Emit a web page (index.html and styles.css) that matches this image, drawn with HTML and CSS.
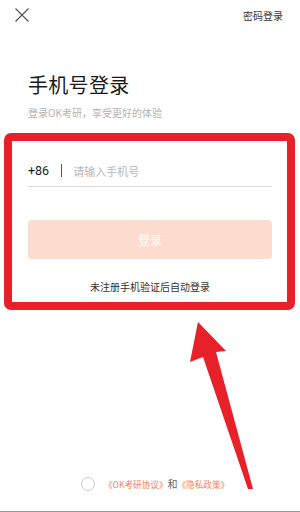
FILE: index.html
```html
<!DOCTYPE html>
<html lang="zh-CN">

<head>
    <meta charset="UTF-8">
    <meta name="viewport" content="width=device-width, initial-scale=1.0">
    <link rel="stylesheet" href="styles.css">
    <title>手机号登录</title>
</head>

<body>

    <div class="page">
        <header class="top-bar">
            <svg class="close-icon" width="14" height="14" viewBox="0 0 14 14">
                <path d="M0.5 0.5 L13.5 13.5 M13.5 0.5 L0.5 13.5" stroke="#555" stroke-width="1.2" fill="none" />
            </svg>
            <a href="#" class="pwd-login">密码登录</a>
        </header>

        <h1 class="title">手机号登录</h1>
        <p class="subtitle">登录OK考研，享受更好的体验</p>

        <div class="login-box">
            <div class="phone-row">
                <span class="code">+86</span>
                <span class="divider"></span>
                <input type="text" placeholder="请输入手机号">
            </div>
            <button type="button" class="login-btn">登录</button>
            <p class="hint">未注册手机验证后自动登录</p>
        </div>

        <div class="agree">
            <span class="radio"></span>
            <a href="#">《OK考研协议》</a><span class="and">和</span><a href="#">《隐私政策》</a>
        </div>

        <!-- annotation arrow -->
        <svg class="arrow" width="300" height="512" viewBox="0 0 300 512">
            <polygon points="198,322 226,351 216,352 253,489 248,489 203,357 190,362" fill="#e8202a" />
        </svg>
    </div>

</body>

</html>
```

FILE: styles.css
```css
body {
    margin: 0;
    padding: 0;
    background-color: #fff;
    color: #222;
    font-family: "Noto Sans CJK SC", "Noto Sans", sans-serif;
}

.page {
    position: relative;
    width: 300px;
    height: 511px;
    border-bottom: 1px solid #9a9a9a;
    display: flex;
    flex-direction: column;
}

.top-bar {
    display: flex;
    justify-content: space-between;
    align-items: center;
    height: 30px;
    padding: 0 17px 0 15px;
}

.close-icon {
    display: block;
}

.pwd-login {
    font-size: 10px;
    color: #333;
    text-decoration: none;
}

.title {
    margin: 42px 0 0 28px;
    font-size: 20px;
    font-weight: 400;
    line-height: 26px;
    color: #1a1a1a;
    letter-spacing: 0.3px;
}

.subtitle {
    margin: 8px 0 0 28px;
    font-size: 10px;
    line-height: 14px;
    color: #b3b3b3;
}

.login-box {
    margin: 13px 5px 0 4px;
    border: 8px solid #e8202a;
    border-radius: 7px;
    padding: 14px 15px 0 16px;
    height: 147px;
}

.phone-row {
    display: flex;
    align-items: center;
    height: 31px;
    border-bottom: 1px solid #dcdcdc;
}

.code {
    font-family: "Roboto", "Noto Sans", sans-serif;
    font-size: 12.5px;
    color: #222;
}

.divider {
    width: 1px;
    height: 13px;
    background-color: #555;
    margin: 0 11px 0 12px;
}

input {
    flex: 1;
    border: none;
    outline: none;
    padding: 0;
    font-family: "Noto Sans CJK SC", sans-serif;
    font-size: 11px;
    color: #222;
    background: transparent;
}

input::placeholder {
    color: #b8b8b8;
}

.login-btn {
    display: block;
    width: 100%;
    height: 39px;
    margin-top: 33px;
    border: none;
    border-radius: 4px;
    background-color: #fddcd0;
    color: #fff;
    font-family: "Noto Sans CJK SC", sans-serif;
    font-size: 12px;
    cursor: pointer;
}

.hint {
    margin: 21px 0 0;
    text-align: center;
    font-size: 10px;
    line-height: 14px;
    color: #333;
}

.agree {
    margin-top: auto;
    margin-bottom: 20px;
    display: flex;
    align-items: center;
    padding-left: 81px;
    font-size: 8.6px;
    line-height: 14px;
}

.radio {
    width: 12px;
    height: 12px;
    border: 1px solid #c8c8c8;
    border-radius: 50%;
    margin-right: 9px;
}

.agree a {
    color: #f0845a;
    text-decoration: none;
}

.and {
    color: #666;
    font-size: 10px;
}

.arrow {
    position: absolute;
    top: 0;
    left: 0;
    pointer-events: none;
}
```
